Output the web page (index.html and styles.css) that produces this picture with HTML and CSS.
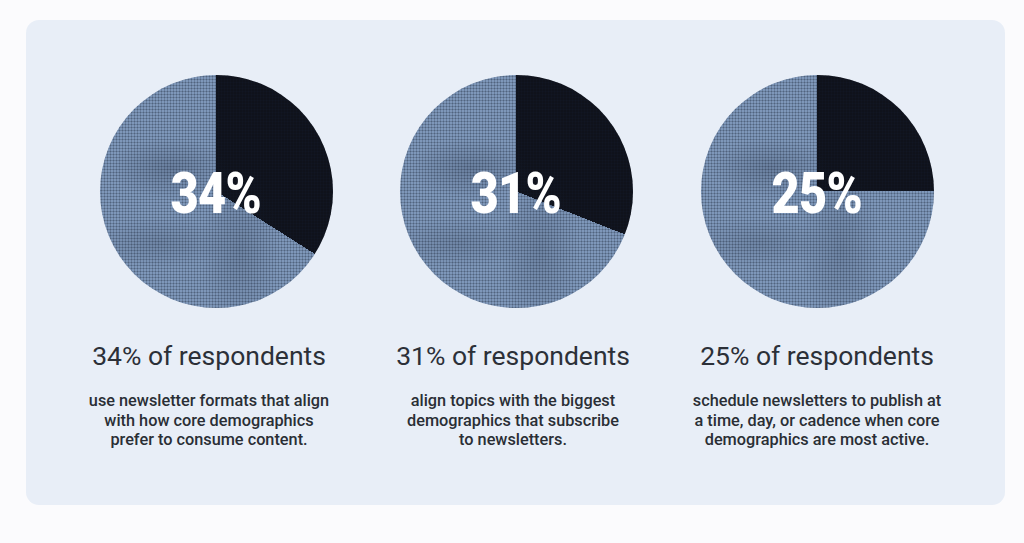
FILE: index.html
```html
<!DOCTYPE html>
<html lang="en">
<head>
<meta charset="utf-8">
<title>Newsletter respondents</title>
<link rel="stylesheet" href="styles.css">
</head>
<body>
<div class="page">
  <section class="card">
    <div class="col">
      <div class="pie pie-34"><span class="pct">34%</span></div>
      <h2 class="head">34% of respondents</h2>
      <p class="desc">use newsletter formats that align<br>with how core demographics<br>prefer to consume content.</p>
    </div>
    <div class="col">
      <div class="pie pie-31"><span class="pct">31%</span></div>
      <h2 class="head">31% of respondents</h2>
      <p class="desc">align topics with the biggest<br>demographics that subscribe<br>to newsletters.</p>
    </div>
    <div class="col">
      <div class="pie pie-25"><span class="pct">25%</span></div>
      <h2 class="head">25% of respondents</h2>
      <p class="desc">schedule newsletters to publish at<br>a time, day, or cadence when core<br>demographics are most active.</p>
    </div>
  </section>
</div>
</body>
</html>
```
FILE: styles.css
```css
html, body {
  margin: 0;
  padding: 0;
  background: #fbfbfd;
}
body {
  font-family: Roboto, "Liberation Sans", Arial, sans-serif;
  color: #2c3038;
}
.page {
  padding: 20px 19px 38px 26px;
}
.card {
  height: 485px;
  box-sizing: border-box;
  background: #e8eef7;
  border-radius: 13px;
  padding: 55px 35px 0 31px;
  display: grid;
  grid-template-columns: repeat(3, 304px);
}
.col {
  display: flex;
  flex-direction: column;
  align-items: center;
}
.pie {
  position: relative;
  width: 233px;
  height: 233px;
  border-radius: 50%;
  overflow: hidden;
  display: flex;
  align-items: center;
  justify-content: center;
}
.pie-34 { background: conic-gradient(#0f121b 0 34%, #7e97b9 34% 100%); margin-left: 14px; }
.pie-31 { background: conic-gradient(#0f121b 0 31%, #7e97b9 31% 100%); margin-left: 6px; }
.pie-25 { background: conic-gradient(#0f121b 0 25%, #7e97b9 25% 100%); }
.pie::before {
  content: "";
  position: absolute;
  inset: 0;
  background:
    radial-gradient(ellipse 60px 30px at 30% 40%, rgba(30,40,60,0.22), transparent),
    radial-gradient(ellipse 40px 80px at 60% 75%, rgba(30,40,60,0.18), transparent),
    radial-gradient(ellipse 70px 25px at 25% 72%, rgba(30,40,60,0.16), transparent);
}
.pie::after {
  content: "";
  position: absolute;
  inset: 0;
  background-image: radial-gradient(circle, rgba(20,28,45,0.42) 0.7px, transparent 1.3px);
  background-size: 3px 3px;
}
.pct {
  position: relative;
  z-index: 1;
  color: #ffffff;
  font-family: Roboto, "Liberation Sans", Arial, sans-serif;
  font-weight: 900;
  font-size: 58px;
  line-height: 1;
  letter-spacing: -1px;
  transform: scaleX(0.84);
  margin-top: 2px;
}
.head {
  margin: 32px 0 0;
  font-size: 26.5px;
  line-height: 32px;
  font-weight: 400;
  color: #2c3038;
  white-space: nowrap;
}
.desc {
  margin: 19px 0 0;
  font-size: 16.3px;
  line-height: 19.5px;
  font-weight: 500;
  color: #2a2e35;
  text-align: center;
  white-space: nowrap;
}
```
